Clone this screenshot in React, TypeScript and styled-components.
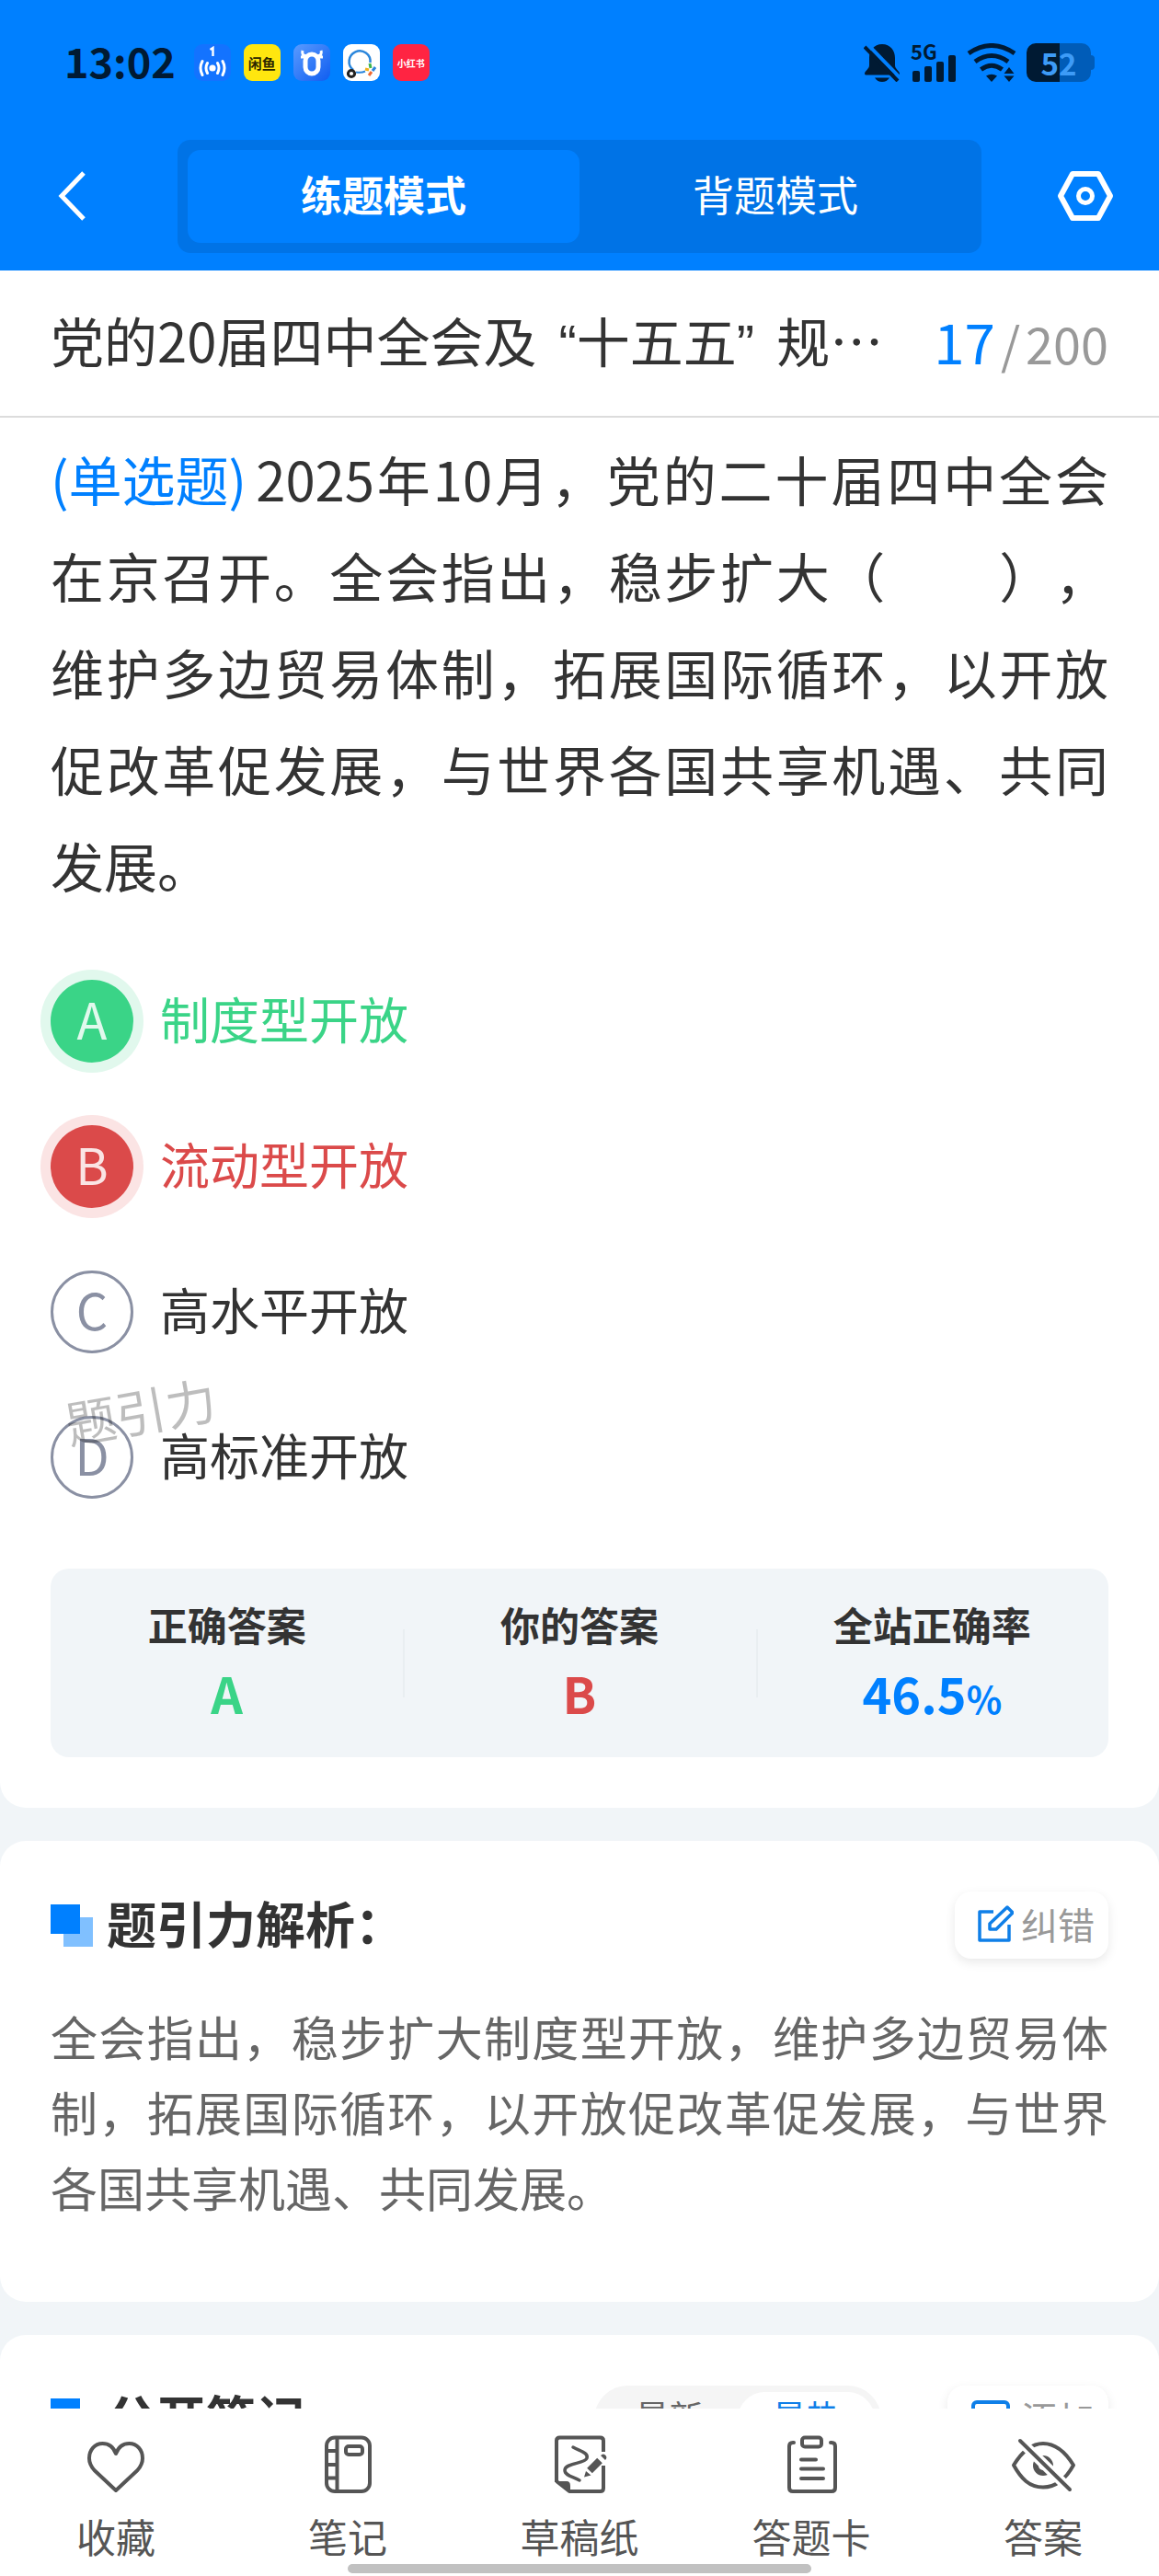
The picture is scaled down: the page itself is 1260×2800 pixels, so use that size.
import React, { useState } from "react";
import styled, { createGlobalStyle, css } from "styled-components";

const color = {
  brand: "#0080ff",
  brandDark: "#0073e6",
  status: "#001a33",
  ink: "#333333",
  body: "#666666",
  muted: "#999999",
  nav: "#555555",
  ring: "#8a90a3",
  green: "#3ad487",
  greenHalo: "#e1f8ed",
  red: "#db4a4a",
  redHalo: "#fbe4e4",
  surface: "#ffffff",
  canvas: "#f1f5f8",
  line: "#dcdcdc",
};

const GlobalStyle = createGlobalStyle`
  *, *::before, *::after { box-sizing: border-box; }
  body {
    margin: 0;
    background: ${color.canvas};
    color: ${color.ink};
    font-family: "Noto Sans CJK SC", "Noto Sans", sans-serif;
    text-spacing-trim: space-all;
  }
  button {
    margin: 0;
    padding: 0;
    border: 0;
    background: none;
    color: inherit;
    font: inherit;
    cursor: pointer;
  }
  h1, h2, p, dl, dt, dd, fieldset { margin: 0; padding: 0; border: 0; }
`;

const Screen = styled.div`
  display: flex;
  flex-direction: column;
  height: 100vh;
  overflow: hidden;
`;

/* Header */

const Header = styled.header`
  flex: none;
  background: ${color.brand};
  padding-bottom: 19px;
`;

const StatusBar = styled.div`
  display: flex;
  align-items: center;
  justify-content: space-between;
  height: 136px;
  padding: 0 70px;
  color: ${color.status};
`;

const StatusGroup = styled.div<{ $gap: number }>`
  display: flex;
  align-items: center;
  gap: ${(p) => p.$gap}px;
`;

const Clock = styled.time`
  margin-right: 6px;
  padding-bottom: 4px;
  font-size: 45px;
  font-weight: 700;
  line-height: 56px;
`;

const AppBadge = styled.span<{ $bg: string; $ink?: string; $size?: number }>`
  display: flex;
  align-items: center;
  justify-content: center;
  width: 40px;
  height: 40px;
  border-radius: 9px;
  background: ${(p) => p.$bg};
  color: ${(p) => p.$ink ?? "#fff"};
  font-size: ${(p) => p.$size ?? 10}px;
  font-weight: 700;
  white-space: nowrap;
`;

const Signal = styled.div`
  position: relative;
  width: 50px;
  height: 42px;
`;

const SignalLabel = styled.span`
  position: absolute;
  top: 0;
  left: 0;
  font-size: 22px;
  font-weight: 700;
  line-height: 16px;
`;

const Battery = styled.div`
  display: flex;
  align-items: center;
`;

const BatteryBody = styled.span`
  display: flex;
  align-items: center;
  justify-content: center;
  width: 70px;
  height: 42px;
  border-radius: 10px;
  background: linear-gradient(90deg, ${color.status} 51%, #005cb8 51%);
  color: #3d9bf7;
  font-size: 33px;
  font-weight: 700;
  line-height: 42px;
`;

const BatteryTip = styled.span`
  width: 4px;
  height: 16px;
  border-radius: 0 4px 4px 0;
  background: #005cb8;
`;

const HeaderRow = styled.div`
  display: grid;
  grid-template-columns: 144px 1fr 144px;
  align-items: center;
  margin-top: 16px;
  padding: 0 49px;
`;

const HeaderButton = styled.button<{ $end?: boolean }>`
  display: flex;
  justify-self: ${(p) => (p.$end ? "end" : "start")};
  color: #fff;
`;

const ModeTabs = styled.div`
  display: grid;
  grid-template-columns: 1fr 1fr;
  height: 123px;
  padding: 11px;
  border-radius: 14px;
  background: ${color.brandDark};
`;

const ModeTab = styled.button<{ $active: boolean }>`
  padding-bottom: 6px;
  border-radius: 14px;
  background: ${(p) => (p.$active ? color.brand : "transparent")};
  color: #fff;
  font-size: 45px;
  font-weight: ${(p) => (p.$active ? 700 : 400)};
  line-height: 60px;
`;

/* Title row */

const TitleRow = styled.div`
  flex: none;
  display: flex;
  align-items: center;
  gap: 45px;
  height: 160px;
  padding: 0 55px 4px;
  border-bottom: 2px solid ${color.line};
  background: ${color.surface};
`;

const PaperTitle = styled.h1`
  flex: 1;
  min-width: 0;
  overflow: hidden;
  font-size: 58px;
  font-weight: 400;
  line-height: 86px;
  white-space: nowrap;
  text-overflow: ellipsis;
`;

const Quote = styled.span<{ $side: "open" | "close" }>`
  font-family: "Liberation Sans", sans-serif;
  ${(p) => (p.$side === "open" ? "padding-left: 8px;" : "padding-right: 8px;")}
`;

const Counter = styled.div`
  display: flex;
  align-items: baseline;
  gap: 6px;
  color: ${color.muted};
  font-size: 54px;
  line-height: 86px;
`;

const CounterNow = styled.strong`
  color: ${color.brand};
  font-size: 60px;
  font-weight: 400;
`;

/* Scrolling content */

const Content = styled.main`
  flex: 1;
  min-height: 0;
  display: flex;
  flex-direction: column;
  gap: 36px;
  overflow-y: auto;
  scrollbar-width: none;
`;

const Card = styled.section<{ $first?: boolean }>`
  flex: none;
  background: ${color.surface};
  ${(p) =>
    p.$first
      ? css`
          padding: 14px 55px 55px;
          border-radius: 0 0 28px 28px;
        `
      : css`
          padding: 55px 55px 84px;
          border-radius: 28px;
        `}
`;

const Question = styled.p`
  font-size: 58px;
  line-height: 105px;
  text-align: justify;
`;

const QuestionKind = styled.span`
  display: inline-block;
  margin-right: 10px;
  color: ${color.brand};
`;

const Options = styled.fieldset`
  position: relative;
  display: flex;
  flex-direction: column;
  gap: 68px;
  margin: 72px 0 76px;
`;

type OptionState = "correct" | "wrong" | "idle";

const stateInk = { correct: color.green, wrong: color.red, idle: color.ink };

const OptionRow = styled.label<{ $state: OptionState }>`
  display: flex;
  align-items: center;
  gap: 29px;
  color: ${(p) => stateInk[p.$state]};
  font-size: 54px;
  line-height: 84px;
  cursor: pointer;
`;

const OptionText = styled.span`
  padding-bottom: 6px;
`;

const HiddenRadio = styled.input`
  position: absolute;
  width: 1px;
  height: 1px;
  margin: 0;
  opacity: 0;
`;

const OptionMark = styled.span<{ $state: OptionState }>`
  display: flex;
  align-items: center;
  justify-content: center;
  width: 90px;
  height: 90px;
  padding-bottom: 6px;
  border-radius: 50%;
  ${(p) =>
    p.$state === "idle"
      ? css`
          border: 3px solid ${color.ring};
          color: ${color.ring};
        `
      : css`
          background: ${stateInk[p.$state]};
          box-shadow: 0 0 0 11px ${p.$state === "correct" ? color.greenHalo : color.redHalo};
          color: rgba(255, 255, 255, 0.85);
        `}
`;

const Watermark = styled.span`
  position: absolute;
  left: 15px;
  bottom: 57px;
  color: rgba(0, 0, 0, 0.26);
  font-size: 55px;
  line-height: 80px;
  transform: rotate(-10deg);
  pointer-events: none;
`;

const Summary = styled.dl`
  display: grid;
  grid-template-columns: repeat(3, 1fr);
  padding: 30px 0 25px;
  border-radius: 20px;
  background: ${color.canvas};
`;

const SummaryItem = styled.div`
  position: relative;
  text-align: center;

  & + &::before {
    content: "";
    position: absolute;
    top: 36px;
    left: 0;
    width: 2px;
    height: 74px;
    background: #e9eef1;
  }
`;

const SummaryLabel = styled.dt`
  font-size: 43px;
  font-weight: 700;
  line-height: 60px;
`;

const SummaryValue = styled.dd<{ $ink: string }>`
  color: ${(p) => p.$ink};
  font-size: 54px;
  font-weight: 700;
  line-height: 90px;

  small {
    font-size: 40px;
    line-height: 40px;
  }
`;

const CardHeader = styled.div`
  display: flex;
  align-items: center;
  height: 73px;
`;

const Squares = styled.svg`
  flex: none;
  width: 46px;
  height: 46px;
  margin-right: 15px;
`;

const CardTitle = styled.h2`
  flex: 1;
  padding-bottom: 6px;
  font-size: 54px;
  font-weight: 700;
  line-height: 67px;
`;

const SoftButton = styled.button`
  display: flex;
  align-items: center;
  gap: 8px;
  height: 73px;
  padding: 0 15px 4px 24px;
  border-radius: 18px;
  background: ${color.surface};
  box-shadow: 0 4px 12px rgba(0, 0, 0, 0.09);
  color: ${color.muted};
  font-size: 40px;
  line-height: 60px;

  svg {
    color: #0f7fe8;
  }
`;

const Explanation = styled.p`
  margin-top: 43px;
  color: ${color.body};
  font-size: 51px;
  line-height: 82px;
  text-align: justify;
`;

const SortSwitch = styled.div`
  display: flex;
  height: 73px;
  margin-right: 72px;
  padding: 7px;
  border-radius: 37px;
  background: #f5f5f5;
`;

const SortButton = styled.button<{ $active: boolean }>`
  width: 149px;
  padding-bottom: 6px;
  border-radius: 30px;
  background: ${(p) => (p.$active ? color.surface : "transparent")};
  color: ${(p) => (p.$active ? "#0f7fe8" : color.body)};
  font-size: 37px;
  line-height: 53px;
`;

/* Bottom navigation */

const BottomNav = styled.nav`
  flex: none;
  position: relative;
  display: grid;
  grid-template-columns: repeat(5, 1fr);
  height: 182px;
  padding-top: 29px;
  background: ${color.surface};
`;

const NavButton = styled.button`
  display: flex;
  flex-direction: column;
  align-items: center;
  gap: 15px;
  color: ${color.nav};
  font-size: 43px;
  line-height: 60px;

  svg {
    overflow: visible;
  }
`;

const HomeIndicator = styled.span`
  position: absolute;
  bottom: 3px;
  left: 30%;
  width: 40%;
  height: 10px;
  border-radius: 5px;
  background: #c1c1c1;
`;

/* Drawings */

const HotspotIcon = () => (
  <svg width="30" height="36" viewBox="0 0 30 36" fill="none" stroke="#fff" strokeWidth="3" strokeLinecap="round">
    <path d="M12.500 4L15.500 2v9" strokeWidth="2.400" strokeLinecap="butt" />
    <circle cx="15" cy="24" r="3.600" fill="#fff" stroke="none" />
    <path d="M9.500 18.500q-3 5.500 0 11M20.500 18.500q3 5.500 0 11M4 16.500q-4 7.500 0 15M26 16.500q4 7.500 0 15" />
  </svg>
);

const BullIcon = () => (
  <svg width="28" height="30" viewBox="0 0 28 30" fill="none" stroke="#fff">
    <path d="M8.500 8C4 8 3 5 4 2M19.500 8C24 8 25 5 24 2M2 9h6M20 9h6" strokeWidth="3" />
    <rect x="7" y="6" width="14" height="21" rx="7" strokeWidth="5" />
  </svg>
);

const SearchBadgeIcon = () => (
  <svg width="36" height="36" viewBox="0 0 36 36" fill="none">
    <path d="M9 26A11.500 11.500 0 1 1 27.500 18" stroke="#2a86dc" strokeWidth="2.500" />
    <path d="M12 28.500q6 1 10-1" stroke="#2a86dc" strokeWidth="2" />
    <circle cx="7" cy="30" r="3.600" stroke="#222" strokeWidth="3" />
    <path d="M27 19l1 5" stroke="#3fb54a" strokeWidth="3" />
    <path d="M33 23l-3 4" stroke="#2a86dc" strokeWidth="3" />
    <path d="M22 25l4 1" stroke="#f2b01e" strokeWidth="3" />
    <path d="M26 32l3-4" stroke="#ef6a32" strokeWidth="3" />
  </svg>
);

const BellOffIcon = () => (
  <svg width="40" height="42" viewBox="0 0 40 42">
    <path
      fill="currentColor"
      d="M20 1C11 1 6 8 6 16v8c0 4-5 6-5 9 0 1 1 1.500 2 1.500h34c1 0 2-.5 2-1.500 0-3-5-5-5-9v-8C34 8 29 1 20 1zM12 37.500h16c-2 3-4.500 4.500-8 4.500s-6-1.500-8-4.500z"
    />
    <path d="M4 1l36 37" stroke={color.brand} strokeWidth="4" />
    <path d="M1 4l36 37" stroke="currentColor" strokeWidth="4" />
  </svg>
);

const SignalBars = () => (
  <svg width="50" height="42" viewBox="0 0 50 42" fill="currentColor">
    <rect x="2" y="30" width="8" height="12" rx="2" />
    <rect x="15" y="25" width="8" height="17" rx="2" />
    <rect x="28" y="20" width="8" height="22" rx="2" />
    <rect x="41" y="13" width="8" height="29" rx="2" />
  </svg>
);

const WifiIcon = () => (
  <svg width="54" height="42" viewBox="0 0 54 42" fill="none" stroke="currentColor" strokeWidth="5">
    <path d="M2 11Q27-6 52 11M9 20Q27 7 45 20M15.500 28.500Q27 20 38.500 28.500" />
    <path d="M21 35.500q6-3.500 12 0L27 42z" fill="currentColor" stroke="none" />
    <path d="M46 26l5.500 7h-11zM46 42l5.500-6.500h-11z" fill="currentColor" stroke="none" />
  </svg>
);

const BackIcon = () => (
  <svg width="58" height="58" viewBox="0 0 58 58" fill="none" stroke="currentColor" strokeWidth="5">
    <path d="M42 3L18 28l24 25" />
  </svg>
);

const SettingsIcon = () => (
  <svg width="62" height="58" viewBox="0 0 62 58" fill="none" stroke="currentColor" strokeWidth="6">
    <path d="M17 4h28l13 24-13 24H17L4 28z" strokeLinejoin="round" />
    <circle cx="31" cy="28" r="7.500" strokeWidth="5" />
  </svg>
);

const SquaresIcon = () => (
  <Squares viewBox="0 0 46 46" aria-hidden="true">
    <rect x="14" y="14" width="32" height="32" fill="#80c0ff" />
    <rect width="32" height="32" fill={color.brand} />
  </Squares>
);

const EditIcon = () => (
  <svg width="40" height="40" viewBox="0 0 40 40" fill="none" stroke="currentColor" strokeWidth="3.500">
    <path d="M18 7H3v31h32V21" strokeLinejoin="round" />
    <path d="M33 2l6 6-18 18h-7v-6z" strokeLinejoin="round" />
  </svg>
);

const AddIcon = () => (
  <svg width="48" height="40" viewBox="0 0 48 40" fill="none" stroke="currentColor" strokeWidth="4">
    <rect x="4" y="3" width="38" height="34" rx="4" />
    <path d="M23 12v16M15 20h16" />
  </svg>
);

const navStroke = {
  width: 64,
  height: 64,
  viewBox: "0 0 64 64",
  fill: "none",
  stroke: "currentColor",
  strokeWidth: 4,
  strokeLinejoin: "round" as const,
  "aria-hidden": true,
};

const HeartIcon = () => (
  <svg {...navStroke}>
    <path d="M32 20C29 12 24 9 17.500 9C9 9 3 16 3 25c0 6 2 9 5.500 13L32 60l23.500-22C59 34 61 31 61 25C61 16 55 9 46.500 9C40 9 35 12 32 20z" />
  </svg>
);

const NotebookIcon = () => (
  <svg {...navStroke}>
    <rect x="9" y="2.500" width="47" height="58.500" rx="9" />
    <path d="M20.500 2v59M9 17h11M9 32h11M9 46.500h11" />
    <rect x="30" y="12" width="18" height="9" rx="3" />
  </svg>
);

const DraftIcon = () => (
  <svg {...navStroke}>
    <path d="M7 51V6q0-3.500 3.500-3.500h44Q58 2.500 58 6v12M58 33v24.500q0 3.500-3.500 3.500H21L7 50" />
    <path d="M5.500 50H18q4 0 4 5v7z" fill="currentColor" stroke="none" />
    <path
      d="M25 13C32 17 42 19 40 25C38 31 16 30 16 38C16 44 25 45 32 49"
      strokeWidth="3.500"
      strokeLinecap="round"
    />
    <path d="M43 38.500L54 27.500" strokeWidth="8" strokeLinejoin="miter" />
    <path d="M39 39l5.500 4.500L37 45.500zM55 22q3-3 5.500 0 2 2.500-.5 5z" fill="currentColor" stroke="none" />
  </svg>
);

const AnswerSheetIcon = () => (
  <svg {...navStroke} strokeLinecap="round">
    <path d="M13 8h-1q-4 0-4 4v45q0 4 4 4h42q4 0 4-4V12q0-4-4-4h-1" />
    <rect x="22" y="2.500" width="21" height="10" rx="3" />
    <path d="M21 26.500h16M21 36.500h24M21 47h24" />
  </svg>
);

const HiddenEyeIcon = () => (
  <svg {...navStroke} strokeLinecap="round">
    <path d="M0 32.500C9 18 19 9 32 9S56 18 65 32.500C57 47 47 56.500 32 56.500S8 47 0 32.500z" />
    <circle cx="32" cy="33" r="8" strokeWidth="6" />
    <path d="M7 6l54 53" stroke={color.surface} strokeWidth="11" strokeLinecap="butt" />
    <path d="M7 6l54 53" />
  </svg>
);

/* Page data */

const modes = ["练题模式", "背题模式"];

const options = [
  { key: "A", text: "制度型开放" },
  { key: "B", text: "流动型开放" },
  { key: "C", text: "高水平开放" },
  { key: "D", text: "高标准开放" },
];

const correctKey = "A";
const chosenKey = "B";

const navItems = [
  { label: "收藏", Icon: HeartIcon },
  { label: "笔记", Icon: NotebookIcon },
  { label: "草稿纸", Icon: DraftIcon },
  { label: "答题卡", Icon: AnswerSheetIcon },
  { label: "答案", Icon: HiddenEyeIcon },
];

const optionState = (key: string): OptionState =>
  key === correctKey ? "correct" : key === chosenKey ? "wrong" : "idle";

export default function App() {
  const [mode, setMode] = useState(modes[0]);
  const [sort, setSort] = useState("最热");

  return (
    <Screen>
      <GlobalStyle />
      <Header>
        <StatusBar>
          <StatusGroup $gap={14}>
            <Clock>13:02</Clock>
            <AppBadge $bg="#1373ff">
              <HotspotIcon />
            </AppBadge>
            <AppBadge $bg="#ffe60f" $ink="#2b2600" $size={15}>
              闲鱼
            </AppBadge>
            <AppBadge $bg="linear-gradient(135deg, #5a9bff, #0f5df0)">
              <BullIcon />
            </AppBadge>
            <AppBadge $bg="#ffffff">
              <SearchBadgeIcon />
            </AppBadge>
            <AppBadge $bg="#ff2442">小红书</AppBadge>
          </StatusGroup>
          <StatusGroup $gap={11}>
            <BellOffIcon />
            <Signal>
              <SignalLabel>5G</SignalLabel>
              <SignalBars />
            </Signal>
            <WifiIcon />
            <Battery>
              <BatteryBody>52</BatteryBody>
              <BatteryTip />
            </Battery>
          </StatusGroup>
        </StatusBar>
        <HeaderRow>
          <HeaderButton type="button" aria-label="返回">
            <BackIcon />
          </HeaderButton>
          <ModeTabs role="tablist">
            {modes.map((m) => (
              <ModeTab
                key={m}
                type="button"
                role="tab"
                aria-selected={m === mode}
                $active={m === mode}
                onClick={() => setMode(m)}
              >
                {m}
              </ModeTab>
            ))}
          </ModeTabs>
          <HeaderButton type="button" aria-label="设置" $end>
            <SettingsIcon />
          </HeaderButton>
        </HeaderRow>
      </Header>

      <TitleRow>
        <PaperTitle>
          党的20届四中全会及<Quote $side="open"> “</Quote>十五五<Quote $side="close">” </Quote>规划建议
        </PaperTitle>
        <Counter>
          <CounterNow>17</CounterNow>
          <span>/</span>
          <span>200</span>
        </Counter>
      </TitleRow>

      <Content>
        <Card $first>
          <Question>
            <QuestionKind>(单选题)</QuestionKind>
            2025年10月，党的二十届四中全会在京召开。全会指出，稳步扩大（　　），维护多边贸易体制，拓展国际循环，以开放促改革促发展，与世界各国共享机遇、共同发展。
          </Question>
          <Options>
            {options.map((o) => {
              const state = optionState(o.key);
              return (
                <OptionRow key={o.key} $state={state}>
                  <HiddenRadio type="radio" name="answer" value={o.key} defaultChecked={o.key === chosenKey} />
                  <OptionMark $state={state}>{o.key}</OptionMark>
                  <OptionText>{o.text}</OptionText>
                </OptionRow>
              );
            })}
            <Watermark aria-hidden="true">题引力</Watermark>
          </Options>
          <Summary>
            <SummaryItem>
              <SummaryLabel>正确答案</SummaryLabel>
              <SummaryValue $ink={color.green}>{correctKey}</SummaryValue>
            </SummaryItem>
            <SummaryItem>
              <SummaryLabel>你的答案</SummaryLabel>
              <SummaryValue $ink={color.red}>{chosenKey}</SummaryValue>
            </SummaryItem>
            <SummaryItem>
              <SummaryLabel>全站正确率</SummaryLabel>
              <SummaryValue $ink={color.brand}>
                46.5<small>%</small>
              </SummaryValue>
            </SummaryItem>
          </Summary>
        </Card>

        <Card>
          <CardHeader>
            <SquaresIcon />
            <CardTitle>题引力解析：</CardTitle>
            <SoftButton type="button">
              <EditIcon />
              纠错
            </SoftButton>
          </CardHeader>
          <Explanation>
            全会指出，稳步扩大制度型开放，维护多边贸易体制，拓展国际循环，以开放促改革促发展，与世界各国共享机遇、共同发展。
          </Explanation>
        </Card>

        <Card>
          <CardHeader>
            <SquaresIcon />
            <CardTitle>公开笔记</CardTitle>
            <SortSwitch>
              {["最新", "最热"].map((s) => (
                <SortButton key={s} type="button" $active={s === sort} onClick={() => setSort(s)}>
                  {s}
                </SortButton>
              ))}
            </SortSwitch>
            <SoftButton type="button">
              <AddIcon />
              添加
            </SoftButton>
          </CardHeader>
        </Card>
      </Content>

      <BottomNav>
        {navItems.map(({ label, Icon }) => (
          <NavButton key={label} type="button">
            <Icon />
            {label}
          </NavButton>
        ))}
        <HomeIndicator />
      </BottomNav>
    </Screen>
  );
}
